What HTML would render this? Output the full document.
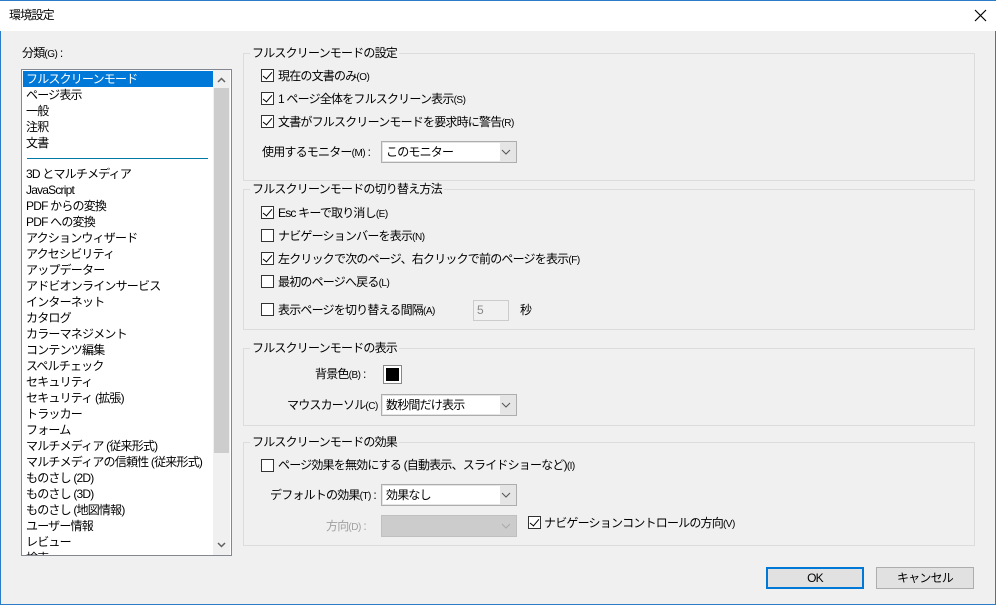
<!DOCTYPE html>
<html><head><meta charset="utf-8"><style>
*{margin:0;padding:0;box-sizing:border-box}
body{width:996px;height:605px;overflow:hidden;background:#f0f0f0;font-family:"Liberation Sans","Noto Sans CJK JP",sans-serif;font-size:12px;color:#000;position:relative;letter-spacing:-0.8px}
.win{position:absolute;left:0;top:0;width:996px;height:605px;border:1px solid #2b7bc6;border-top:none}
.title{position:absolute;left:0;top:0;width:996px;height:31px;background:#fff;border-top:1px solid #2b7bc6}
.a{position:absolute;white-space:nowrap;line-height:16px}
.m{font-size:10px;letter-spacing:-0.5px}
.list{position:absolute;left:21px;top:69px;width:211px;height:487px;background:#fff;border:1px solid #828790;overflow:hidden}
.list div{position:absolute;left:4px;line-height:16px;font-size:12px;white-space:nowrap}
.sb{position:absolute;left:192px;top:0;width:17px;height:485px;background:#f0f0f0}
.grp{position:absolute;border:1px solid #dcdcdc}
.grp .t{position:absolute;left:6px;top:-9px;background:#f0f0f0;padding:0 2px;line-height:16px;font-size:12px}
.cb{position:absolute;width:13px;height:13px;border:1px solid #333;background:#fff}
.cb.on::after{content:"";position:absolute;left:3px;top:0px;width:4px;height:8px;border:solid #000;border-width:0 1.3px 1.3px 0;transform:rotate(40deg)}
.dd{position:absolute;width:136px;height:22px;border:1px solid #adadad;background:#e5e5e5}
.dd .v{position:absolute;left:1px;top:1px;width:117px;height:18px;background:#fff;padding-left:3px;line-height:18px}
.dd.dis .v{display:none}
.dd.dis{background:#ccc;border-color:#bfbfbf}
.dd svg{position:absolute;right:5px;top:7px}
.btn{position:absolute;height:22px;width:98px;background:#e1e1e1;border:1px solid #adadad;text-align:center;line-height:20px}
</style></head><body>
<div class="win"></div>
<div class="title"></div>
<div class="a" style="left:9px;top:7px">環境設定</div>
<svg style="position:absolute;left:974px;top:9px" width="13" height="13"><path d="M1 1L12 12M12 1L1 12" stroke="#000" stroke-width="1.2"/></svg>

<div class="a" style="left:22px;top:45px">分類<span class="m">(G)</span> :</div>
<div class="list">
<div style="left:1px;top:0;width:190px;background:#0078d7;color:#fff;padding-left:3px;top:1px">フルスクリーンモード</div>
<div style="top:17px">ページ表示</div>
<div style="top:33px">一般</div>
<div style="top:49px">注釈</div>
<div style="top:65px">文書</div>
<div style="top:88px;left:5px;width:181px;height:1px;background:#0078a8"></div>
<div style="top:96px">3D とマルチメディア</div>
<div style="top:112px">JavaScript</div>
<div style="top:128px">PDF からの変換</div>
<div style="top:144px">PDF への変換</div>
<div style="top:160px">アクションウィザード</div>
<div style="top:176px">アクセシビリティ</div>
<div style="top:192px">アップデーター</div>
<div style="top:208px">アドビオンラインサービス</div>
<div style="top:224px">インターネット</div>
<div style="top:240px">カタログ</div>
<div style="top:256px">カラーマネジメント</div>
<div style="top:272px">コンテンツ編集</div>
<div style="top:288px">スペルチェック</div>
<div style="top:304px">セキュリティ</div>
<div style="top:320px">セキュリティ (拡張)</div>
<div style="top:336px">トラッカー</div>
<div style="top:352px">フォーム</div>
<div style="top:368px">マルチメディア (従来形式)</div>
<div style="top:384px">マルチメディアの信頼性 (従来形式)</div>
<div style="top:400px">ものさし (2D)</div>
<div style="top:416px">ものさし (3D)</div>
<div style="top:432px">ものさし (地図情報)</div>
<div style="top:448px">ユーザー情報</div>
<div style="top:464px">レビュー</div>
<div style="top:480px">検索</div>
<div class="sb" style="left:191px;top:0">
<svg style="position:absolute;left:4px;top:7px" width="9" height="6"><path d="M1 5L4.5 1.5L8 5" stroke="#606060" stroke-width="1.5" fill="none"/></svg>
<div style="position:absolute;left:1px;top:18px;width:15px;height:365px;background:#cdcdcd"></div>
<svg style="position:absolute;left:4px;top:472px" width="9" height="6"><path d="M1 1L4.5 4.5L8 1" stroke="#606060" stroke-width="1.5" fill="none"/></svg>
</div>
</div>

<div class="grp" style="left:243px;top:53px;width:732px;height:128px"><div class="t">フルスクリーンモードの設定</div></div>
<div class="cb on" style="left:261px;top:69px"></div><div class="a" style="left:278px;top:68px">現在の文書のみ<span class="m">(O)</span></div>
<div class="cb on" style="left:261px;top:92px"></div><div class="a" style="left:278px;top:91px">1 ページ全体をフルスクリーン表示<span class="m">(S)</span></div>
<div class="cb on" style="left:261px;top:115px"></div><div class="a" style="left:278px;top:114px">文書がフルスクリーンモードを要求時に警告<span class="m">(R)</span></div>
<div class="a" style="left:262px;top:144px">使用するモニター<span class="m">(M)</span> :</div>
<div class="dd" style="left:381px;top:141px"><div class="v">このモニター</div><svg width="10" height="6"><path d="M1 1L5 5L9 1" stroke="#555" fill="none"/></svg></div>

<div class="grp" style="left:243px;top:189px;width:732px;height:141px"><div class="t">フルスクリーンモードの切り替え方法</div></div>
<div class="cb on" style="left:261px;top:206px"></div><div class="a" style="left:278px;top:205px">Esc キーで取り消し<span class="m">(E)</span></div>
<div class="cb" style="left:261px;top:229px"></div><div class="a" style="left:278px;top:228px">ナビゲーションバーを表示<span class="m">(N)</span></div>
<div class="cb on" style="left:261px;top:252px"></div><div class="a" style="left:278px;top:251px">左クリックで次のページ、右クリックで前のページを表示<span class="m">(F)</span></div>
<div class="cb" style="left:261px;top:275px"></div><div class="a" style="left:278px;top:274px">最初のページへ戻る<span class="m">(L)</span></div>
<div class="cb" style="left:261px;top:303px"></div><div class="a" style="left:278px;top:302px">表示ページを切り替える間隔<span class="m">(A)</span></div>
<div style="position:absolute;left:473px;top:300px;width:36px;height:21px;border:1px solid #ccc;background:#f0f0f0;color:#888;padding-left:3px;line-height:19px">5</div>
<div class="a" style="left:520px;top:302px">秒</div>

<div class="grp" style="left:243px;top:348px;width:732px;height:78px"><div class="t">フルスクリーンモードの表示</div></div>
<div class="a" style="left:315px;top:366px">背景色<span class="m">(B)</span> :</div>
<div style="position:absolute;left:383px;top:365px;width:19px;height:19px;border:1px solid #888;background:#fff"><div style="margin:2px;width:13px;height:13px;background:#000"></div></div>
<div class="a" style="left:287px;top:397px">マウスカーソル<span class="m">(C)</span> :</div>
<div class="dd" style="left:381px;top:394px"><div class="v">数秒間だけ表示</div><svg width="10" height="6"><path d="M1 1L5 5L9 1" stroke="#555" fill="none"/></svg></div>

<div class="grp" style="left:243px;top:442px;width:732px;height:104px"><div class="t">フルスクリーンモードの効果</div></div>
<div class="cb" style="left:261px;top:459px"></div><div class="a" style="left:278px;top:457px">ページ効果を無効にする (自動表示、スライドショーなど)<span class="m">(I)</span></div>
<div class="a" style="left:270px;top:487px">デフォルトの効果<span class="m">(T)</span> :</div>
<div class="dd" style="left:381px;top:484px"><div class="v">効果なし</div><svg width="10" height="6"><path d="M1 1L5 5L9 1" stroke="#555" fill="none"/></svg></div>
<div class="a" style="left:326px;top:518px;color:#a0a0a0">方向<span class="m">(D)</span> :</div>
<div class="dd dis" style="left:381px;top:515px"><svg width="10" height="6"><path d="M1 1L5 5L9 1" stroke="#aaa" fill="none"/></svg></div>
<div class="cb on" style="left:528px;top:516px"></div><div class="a" style="left:544px;top:515px">ナビゲーションコントロールの方向<span class="m">(V)</span></div>

<div class="btn" style="left:766px;top:567px;border:2px solid #0078d7;line-height:18px">OK</div>
<div class="btn" style="left:876px;top:567px">キャンセル</div>
</body></html>
